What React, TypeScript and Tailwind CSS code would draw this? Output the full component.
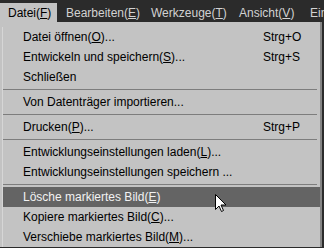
import React from "react";

type Item =
  | { type: "sep" }
  | { type: "item"; label: string; key?: string; rest?: string; shortcut?: string; active?: boolean };

const items: Item[] = [
  { type: "item", label: "Datei öffnen(", key: "O", rest: ")...", shortcut: "Strg+O" },
  { type: "item", label: "Entwickeln und speichern(", key: "S", rest: ")...", shortcut: "Strg+S" },
  { type: "item", label: "Schließen" },
  { type: "sep" },
  { type: "item", label: "Von Datenträger importieren..." },
  { type: "sep" },
  { type: "item", label: "Drucken(", key: "P", rest: ")...", shortcut: "Strg+P" },
  { type: "sep" },
  { type: "item", label: "Entwicklungseinstellungen laden(", key: "L", rest: ")..." },
  { type: "item", label: "Entwicklungseinstellungen speichern ..." },
  { type: "sep" },
  { type: "item", label: "Lösche markiertes Bild(", key: "E", rest: ")", active: true },
  { type: "item", label: "Kopiere markiertes Bild(", key: "C", rest: ")..." },
  { type: "item", label: "Verschiebe markiertes Bild(", key: "M", rest: ")..." },
];

function Cursor() {
  return (
    <svg className="absolute left-[215px] top-[194px]" width="13" height="19" viewBox="0 0 13 19">
      <path
        d="M0.5 0.5 L0.5 15.5 L4 12 L6.5 17.5 L8.5 16.5 L6 11 L11 11 Z"
        fill="#fff"
        stroke="#000"
        strokeWidth="1"
        strokeLinejoin="miter"
      />
    </svg>
  );
}

export default function App() {
  return (
    <div
      className="relative w-[324px] h-[248px] overflow-hidden bg-[#2b2b2b] text-[12px] leading-none"
      style={{ fontFamily: '"Liberation Sans", Arial, sans-serif' }}
    >
      {/* menu bar */}
      <div className="flex h-[22px] items-end whitespace-nowrap">
        <div className="flex h-[19px] w-[57px] shrink-0 items-center bg-[#c3c3c3] pl-[8px] text-black">
          Datei(<span className="underline">F</span>)
        </div>
        <div className="flex h-[19px] w-[86px] shrink-0 items-center pl-[9px] text-[#d2d2d2]">
          Bearbeiten(<span className="underline">E</span>)
        </div>
        <div className="flex h-[19px] w-[88px] shrink-0 items-center pl-[8px] text-[#d2d2d2]">
          Werkzeuge(<span className="underline">T</span>)
        </div>
        <div className="flex h-[19px] w-[71px] shrink-0 items-center pl-[8px] text-[#d2d2d2]">
          Ansicht(<span className="underline">V</span>)
        </div>
        <div className="flex h-[19px] shrink-0 items-center pl-[8px] text-[#d2d2d2]">Ein</div>
      </div>

      {/* dropdown */}
      <div className="w-[322px] border-r-[2px] border-r-[#858585] bg-[#c3c3c3] pt-[5px]">
        <div className="ml-[2px] border-l border-[#d6d6d6]">
          {items.map((it, i) =>
            it.type === "sep" ? (
              <div key={i} className="flex h-[5px] flex-col pr-[3px] pt-[2px]">
                <div className="h-px bg-[#7d7d7d]" />
              </div>
            ) : (
              <div
                key={i}
                className={
                  it.active
                    ? "flex h-[20px] items-center bg-[#646464] pl-[20px] text-[#f2f2f2]"
                    : "flex h-[20px] items-center pl-[20px] text-black"
                }
              >
                <span className="flex-1">
                  {it.label}
                  {it.key && <span className="underline">{it.key}</span>}
                  {it.rest}
                </span>
                {it.shortcut && <span className="w-[57px]">{it.shortcut}</span>}
              </div>
            )
          )}
        </div>
      </div>
      <Cursor />
    </div>
  );
}
